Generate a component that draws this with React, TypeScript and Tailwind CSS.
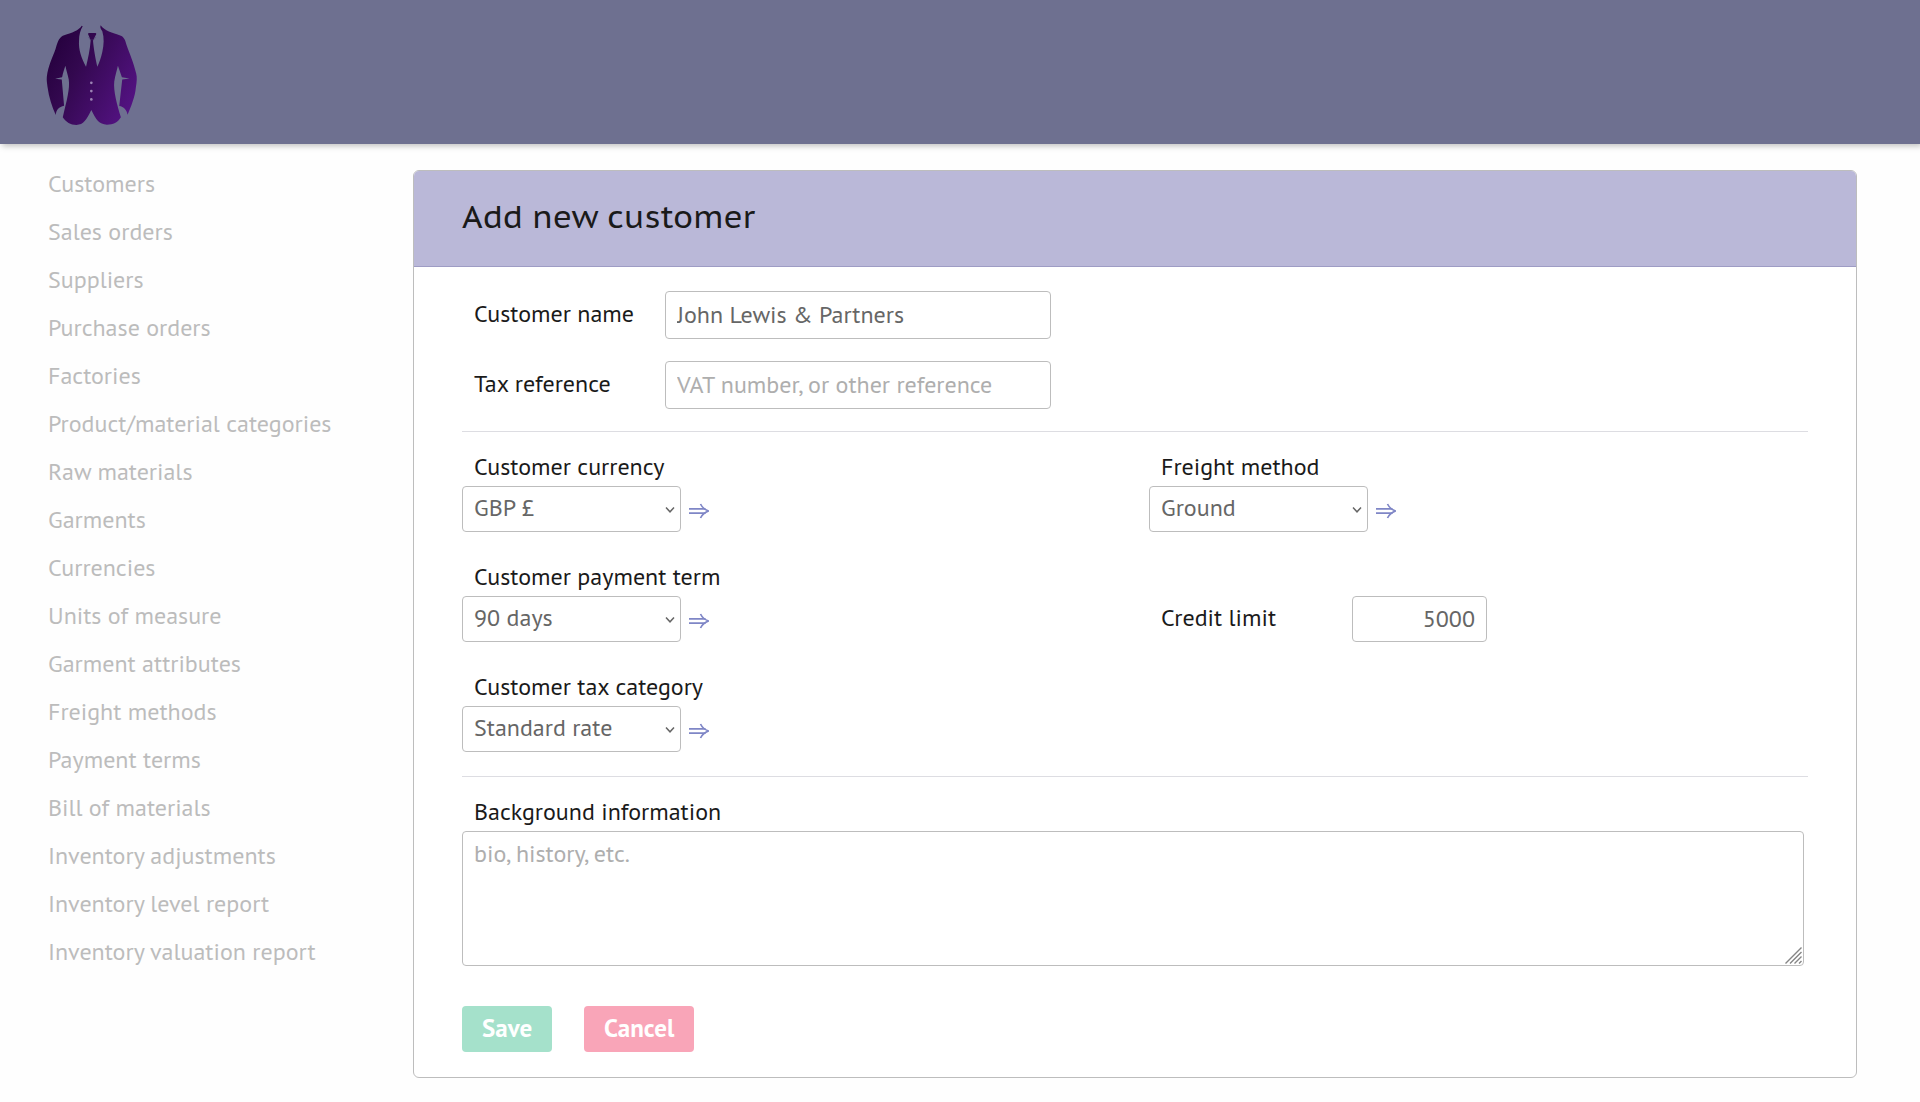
import { useId } from "react";
import type { ReactNode } from "react";

const NAV_ITEMS = [
  "Customers",
  "Sales orders",
  "Suppliers",
  "Purchase orders",
  "Factories",
  "Product/material categories",
  "Raw materials",
  "Garments",
  "Currencies",
  "Units of measure",
  "Garment attributes",
  "Freight methods",
  "Payment terms",
  "Bill of materials",
  "Inventory adjustments",
  "Inventory level report",
  "Inventory valuation report",
];

function SuitLogo() {
  return (
    <svg viewBox="48 44 276 304" className="h-[101px] w-[92px]" aria-hidden="true">
      <defs>
        <linearGradient id="suit" x1="0" y1="0.2" x2="1" y2="0.8">
          <stop offset="0" stopColor="#24003c" />
          <stop offset="0.35" stopColor="#33084f" />
          <stop offset="1" stopColor="#551385" />
        </linearGradient>
      </defs>
      <g fill="url(#suit)">
        <path d="M155 46 C146 60 128 67 98 76 C86 82 81 99 76 117 C67 143 54 166 50 200 C49 212 51 220 52 230 C56 261 66 291 77 315 C78 299 87 290 102 287 L95 208 L75 206 L96 201 C99 188 102 178 106 167 C109 183 113 193 116 208 C120 236 110 271 98 322 C108 337 121 345 139 345 C161 344 169 330 184 300 C199 330 207 343 231 344 C250 344 263 338 273 322 C261 282 250 242 253 214 C256 196 261 181 264 167 L276 201 L299 205 L277 208 L268 288 C282 290 290 299 293 314 C303 291 316 259 318 232 C321 215 322 202 319 190 C311 156 299 130 290 104 C286 88 282 80 273 76 C246 68 224 62 212 45 C209 52 213 57 217 63 C223 83 222 104 217 125 C213 143 208 156 202 170 C197 148 191 116 189 91 L199 71 Q199 68 196 68 L177 68 Q174 68 174 71 L182 90 C180 119 174 145 168 170 C154 143 145 119 147 91 C147 74 151 60 158 48 Z" />
      </g>
      <path d="M175 80 L182 90 M198 80 L189 91 M181 88 H190" stroke="#4a3569" strokeWidth="1" fill="none" />
      <g fill="#9c83b4">
        <circle cx="184" cy="218" r="4" />
        <circle cx="184" cy="243" r="4" />
        <circle cx="184" cy="268" r="4" />
      </g>
    </svg>
  );
}

function ArrowLink({ label }: { label: string }) {
  return (
    <a href="#" aria-label={label} className="pt-[3px] text-[#7f86c6]">
      <svg viewBox="0 0 20 16" className="h-4 w-5" fill="none" stroke="currentColor" strokeWidth="1.7" aria-hidden="true">
        <path d="M0 5.800 H16.500 M0 10.200 H16.500" />
        <path d="M11.500 1 C13 4.200 15.500 6.500 19.500 8 C15.500 9.500 13 11.800 11.500 15" />
      </svg>
    </a>
  );
}

function Rule() {
  return <hr className="h-px border-0 bg-[#dddde2]" />;
}

function TextRow({ label, children }: { label: string; children: (id: string) => ReactNode }) {
  const id = useId();
  return (
    <div className="flex items-center">
      <label htmlFor={id} className="w-[203px] pb-0.5 pl-3 text-2xl leading-[30px]">
        {label}
      </label>
      {children(id)}
    </div>
  );
}

function SelectField({ label, value }: { label: string; value: string }) {
  const id = useId();
  return (
    <div className="flex flex-col gap-1">
      <label htmlFor={id} className="pl-3 text-2xl leading-[30px]">
        {label}
      </label>
      <div className="flex items-center gap-2">
        <div className="relative">
          <select
            id={id}
            defaultValue={value}
            className="h-[46px] w-[219px] appearance-none rounded border border-[#bdbdbd] bg-white pr-8 pb-0.5 pl-[11px] text-2xl text-[#666]"
          >
            <option>{value}</option>
          </select>
          <svg
            viewBox="0 0 10 6"
            className="pointer-events-none absolute top-[21px] right-[6px] h-[6px] w-[10px]"
            fill="none"
            stroke="#666"
            strokeWidth="1.5"
            aria-hidden="true"
          >
            <path d="M1 0.500 L5 4.800 L9 0.500" />
          </svg>
        </div>
        <ArrowLink label={`Open ${label.toLowerCase()}`} />
      </div>
    </div>
  );
}

export default function App() {
  return (
    <div className="min-h-screen bg-[#fefefe] font-['PT_Sans','Noto_Sans',sans-serif] text-[#1a1a1a]">
      <header className="flex h-36 items-start bg-[#6e7090] px-[46px] pt-[25px] shadow-[2px_2px_6px_rgba(0,0,0,0.25)]">
        <a href="#" aria-label="Home">
          <SuitLogo />
        </a>
      </header>

      <div className="flex items-start pt-[26px] pr-[63px]">
        <nav className="w-[413px] shrink-0 pl-12">
          <ul className="-mt-2.5">
            {NAV_ITEMS.map((item) => (
              <li key={item}>
                <a href="#" className="block text-2xl leading-[48px] text-[#bcbcbc]">
                  {item}
                </a>
              </li>
            ))}
          </ul>
        </nav>

        <main className="min-w-0 flex-1 overflow-hidden rounded-md border border-[#bdbdbd] bg-white">
          <div className="border-b border-[#9e9cc4] bg-[#bab8d8] px-12 pt-[21px] pb-[26px]">
            <h1 className="font-['PT_Sans_Caption','PT_Sans','Noto_Sans',sans-serif] text-[32px] leading-[48px]">
              Add new customer
            </h1>
          </div>

          <form className="px-12 pt-6 pb-[25px]">
            <div className="flex flex-col gap-[22px] pb-[22px]">
              <TextRow label="Customer name">
                {(id) => (
                  <input
                    id={id}
                    type="text"
                    defaultValue="John Lewis & Partners"
                    className="h-12 w-[386px] rounded border border-[#bdbdbd] px-[11px] pb-0.5 text-2xl text-[#666]"
                  />
                )}
              </TextRow>
              <TextRow label="Tax reference">
                {(id) => (
                  <input
                    id={id}
                    type="text"
                    placeholder="VAT number, or other reference"
                    className="h-12 w-[386px] rounded border border-[#bdbdbd] px-[11px] pb-0.5 text-2xl text-[#666] placeholder:text-[#aeaeae]"
                  />
                )}
              </TextRow>
            </div>

            <Rule />

            <div className="grid grid-cols-2 items-end gap-x-7 gap-y-[30px] pt-5 pb-6">
              <SelectField label="Customer currency" value="GBP £" />
              <SelectField label="Freight method" value="Ground" />
              <SelectField label="Customer payment term" value="90 days" />
              <TextRow label="Credit limit">
                {(id) => (
                  <input
                    id={id}
                    type="text"
                    inputMode="numeric"
                    defaultValue="5000"
                    className="h-[46px] w-[135px] rounded border border-[#bdbdbd] px-[11px] pb-0.5 text-right text-2xl text-[#666]"
                  />
                )}
              </TextRow>
              <SelectField label="Customer tax category" value="Standard rate" />
            </div>

            <Rule />

            <div className="flex flex-col gap-1 pt-5 pr-1">
              <label htmlFor="background" className="pl-3 text-2xl leading-[30px]">
                Background information
              </label>
              <div className="relative flex">
                <textarea
                  id="background"
                  placeholder="bio, history, etc."
                  className="h-[135px] w-full resize-none rounded border border-[#bdbdbd] px-[11px] py-[7px] text-2xl leading-[30px] text-[#666] placeholder:text-[#aeaeae]"
                />
                <svg
                  viewBox="0 0 17 17"
                  className="pointer-events-none absolute right-[2px] bottom-[2px] size-[17px]"
                  fill="none"
                  stroke="#858585"
                  strokeWidth="1.4"
                  aria-hidden="true"
                >
                  <path d="M0.500 16.500 L16.500 0.500 M5 16.500 L16.500 5 M9.500 16.500 L16.500 9.500 M14 16.500 L16.500 14" />
                </svg>
              </div>
            </div>

            <div className="flex gap-8 pt-10">
              <button
                type="button"
                className="h-[46px] rounded bg-[#a5e1cb] px-5 text-[25px] font-bold text-white"
              >
                Save
              </button>
              <button
                type="button"
                className="h-[46px] rounded bg-[#f9a5b8] px-5 text-[25px] font-bold text-white"
              >
                Cancel
              </button>
            </div>
          </form>
        </main>
      </div>
    </div>
  );
}
